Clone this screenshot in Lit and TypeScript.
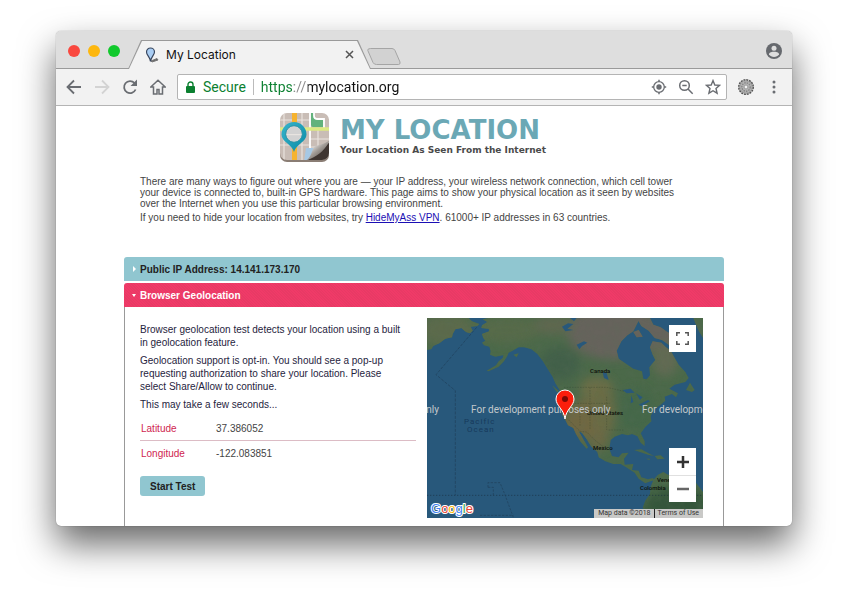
import { LitElement, html, css, svg } from "lit";
import { customElement, state } from "lit/decorators.js";

const NORTH_AMERICA =
  "M205 24 L188 28 L202 36 L186 46 L184 54 L206 56 L208 64 L186 72 L190 84 L196 92 L186 98 L192 106 L208 110 L212 124 L210 134 L226 140 L250 136 L248 144 L236 154 L228 166 L200 182 L206 184 L236 170 L252 154 L262 138 L266 128 L278 122 L296 112 L312 112 L334 118 L352 132 L368 152 L384 178 L398 200 L406 220 L420 242 L430 262 L428 290 L425 312 L436 330 L444 346 L460 354 L468 372 L482 396 L500 416 L504 412 L490 388 L476 364 L486 368 L500 388 L514 410 L532 426 L536 442 L556 454 L580 462 L602 462 L622 474 L644 488 L656 506 L676 520 L692 514 L704 510 L698 504 L684 508 L664 502 L656 482 L636 480 L640 462 L614 464 L612 446 L626 428 L606 430 L596 442 L576 438 L568 416 L572 390 L584 380 L606 372 L624 376 L636 372 L652 378 L662 398 L674 408 L674 394 L662 370 L676 350 L694 334 L692 318 L700 300 L722 284 L736 272 L734 260 L756 252 L768 262 L774 250 L748 236 L764 224 L796 216 L806 204 L796 186 L776 164 L764 144 L752 122 L738 112 L724 98 L698 94 L690 112 L698 134 L706 150 L688 172 L690 196 L680 208 L670 206 L666 184 L640 176 L616 160 L596 146 L590 122 L604 94 L622 76 L640 64 L650 44 L660 24 Z";
const SOUTH_AMERICA =
  "M849 540 L849 624 L692 624 L680 602 L668 594 L676 572 L690 552 L692 530 L700 510 L714 494 L730 486 L744 494 L780 490 L812 506 L826 516 L849 546 Z";
const SIBERIA =
  "M21 24 L146 24 L156 34 L178 42 L172 48 L152 50 L158 62 L150 70 L138 66 L124 54 L106 58 L98 72 L96 82 L76 86 L58 100 L40 108 L34 118 L21 120 Z";
const ISLANDS =
  "M650 24 L690 24 L700 44 L722 52 L742 66 L776 84 L776 104 L746 104 L726 90 L704 84 L686 62 L664 48 Z M640 66 L656 60 L668 80 L650 82 Z M820 24 L849 24 L849 84 L838 66 L828 44 Z M798 240 L810 218 L824 240 L816 246 Z M642 420 L664 418 L690 432 L702 438 L684 434 L660 426 Z M704 438 L722 436 L734 446 L712 448 Z M678 446 L690 446 L688 450 Z M280 134 L296 130 L290 142 Z M396 226 L416 242 L412 248 Z";
const LAKES =
  "M426 50 L444 40 L460 42 L442 56 L460 60 L436 64 Z M470 104 L492 94 L502 98 L486 108 L478 118 Z M548 186 L560 190 L566 210 L552 204 Z M608 240 L632 236 L644 248 L620 250 Z M634 256 L640 276 L632 280 Z M648 250 L668 262 L660 270 Z M656 284 L684 270 L690 274 L664 288 Z M450 24 L470 24 L462 34 Z";

@customElement("location-map")
export class LocationMap extends LitElement {
  static styles = css`
    :host {
      display: block;
    }
    .map {
      position: relative;
      height: 200px;
      overflow: hidden;
      background: #28587b;
      font-family: Roboto, "Liberation Sans", sans-serif;
    }
    .chart {
      display: block;
      width: 100%;
      height: 100%;
    }
    .place {
      font-size: 6px;
      fill: #0c0f0a;
      font-weight: 500;
    }
    .sea {
      font-size: 8px;
      letter-spacing: 1px;
      fill: #173a5c;
    }
    .notice {
      font-size: 10px;
      fill: #c3c8cc;
    }
    .brand {
      font: 13px "Liberation Sans", sans-serif;
      stroke: #fff;
      stroke-width: 2px;
      paint-order: stroke;
      stroke-linejoin: round;
    }
    .b {
      fill: #4285f4;
    }
    .r {
      fill: #ea4335;
    }
    .y {
      fill: #fbbc05;
    }
    .g {
      fill: #34a853;
    }
    .key {
      display: flex;
      align-items: center;
      justify-content: center;
      width: 27px;
      height: 27px;
      padding: 0;
      border: 0;
      background: #fff;
    }
    .full {
      position: absolute;
      top: 7px;
      right: 7px;
    }
    .zoom {
      position: absolute;
      right: 7px;
      bottom: 16px;
      background: #fff;
    }
    .zoom .key + .key {
      border-top: 1px solid #e0e0e0;
    }
    .credit {
      position: absolute;
      right: 0;
      bottom: 0;
      display: flex;
      gap: 3px;
      padding: 0 4px;
      background: #c9c9c7;
      font-size: 7px;
      line-height: 9px;
      color: #333;
    }
    .credit a {
      padding-left: 3px;
      border-left: 1px solid #222;
      color: #333;
      text-decoration: none;
    }
  `;

  render() {
    return html`
      <div class="map">
        <svg class="chart" viewBox="0 0 276 200" preserveAspectRatio="xMidYMid slice" role="img" aria-label="Map of North America">
          <defs>
            <clipPath id="land">
              <path d=${NORTH_AMERICA} /><path d=${SOUTH_AMERICA} /><path d=${SIBERIA} /><path d=${ISLANDS} />
            </clipPath>
            <filter id="soft" x="-30%" y="-30%" width="160%" height="160%"><feGaussianBlur stdDeviation="14" /></filter>
            <filter id="relief" x="0" y="0" width="100%" height="100%">
              <feTurbulence type="fractalNoise" baseFrequency=".04" numOctaves="3" seed="4" />
              <feColorMatrix values="0 0 0 0 .1  0 0 0 0 .16  0 0 0 0 .1  1.6 0 0 0 -.6" />
            </filter>
          </defs>
          <g transform="scale(.33333) translate(-21 -24)">
            <g clip-path="url(#land)">
              <rect x="21" y="24" width="828" height="600" fill="#4b6949" />
              <g filter="url(#soft)">
                <ellipse cx="580" cy="65" rx="140" ry="85" fill="#66645c" />
                <ellipse cx="740" cy="70" rx="90" ry="60" fill="#66645b" />
                <ellipse cx="735" cy="150" rx="40" ry="50" fill="#626b52" />
                <ellipse cx="260" cy="60" rx="100" ry="40" fill="#566a48" />
                <ellipse cx="400" cy="45" rx="60" ry="30" fill="#5f6850" />
                <ellipse cx="80" cy="60" rx="80" ry="50" fill="#5c6b4b" />
                <ellipse cx="420" cy="160" rx="60" ry="50" fill="#426049" />
                <ellipse cx="530" cy="240" rx="50" ry="40" fill="#6c6e46" />
                <ellipse cx="490" cy="330" rx="62" ry="58" fill="#716743" />
                <ellipse cx="550" cy="310" rx="35" ry="80" fill="#6a6c44" />
                <ellipse cx="535" cy="390" rx="30" ry="32" fill="#6c6945" />
                <ellipse cx="650" cy="300" rx="50" ry="70" fill="#456848" />
                <ellipse cx="770" cy="590" rx="100" ry="60" fill="#35573a" />
              </g>
              <rect x="21" y="24" width="828" height="600" filter="url(#relief)" opacity=".25" />
            </g>
            <path d=${LAKES} fill="#28587b" />
            <g fill="none" stroke="#1e3a52" stroke-width="2" opacity=".8">
              <path d="M170 52 L48 194 L106 242 V556" stroke-dasharray="9 4" />
              <path d="M21 556 H849" stroke-dasharray="4 5" stroke="#17283a" />
              <path d="M204 532 V518 H240 L254 552 L280 622 M204 532 H220 V556 M180 616 H280" stroke-dasharray="7 4" />
              <path d="M432 232 H560 L612 244 M446 330 L480 364 L500 366 L524 390 L552 412 M510 232 V360 M440 280 H570 M480 310 V350 M560 260 V360 M566 360 H610" stroke="#2b382b" stroke-dasharray="5 3" opacity=".5" />
            </g>
          </g>
          <text class="sea" x="37" y="106">Pacific</text>
          <text class="sea" x="40" y="114">Ocean</text>
          <text class="place" x="163" y="55">Canada</text>
          <text class="place" x="160" y="97">United States</text>
          <text class="place" x="166" y="132">Mexico</text>
          <text class="place" x="230" y="164">Venezuela</text>
          <text class="place" x="213" y="172">Colombia</text>
          <text class="notice" x="12" y="95" text-anchor="end">only</text>
          <text class="notice" x="44" y="95">For development purposes only</text>
          <text class="notice" x="215" y="95">For development purposes only</text>
          <path d="M138 101 C137 91 129 88 129 81 A9 9 0 0 1 147 81 C147 88 139 91 138 101 Z" fill="#fb1e0c" stroke="#fff" stroke-width="1" />
          <circle cx="138" cy="81" r="3" fill="#7c0a05" />
          <text class="brand" x="4" y="195"><tspan class="b">G</tspan><tspan class="r">o</tspan><tspan class="y">o</tspan><tspan class="b">g</tspan><tspan class="g">l</tspan><tspan class="r">e</tspan></text>
        </svg>
        <button class="key full" aria-label="Toggle full screen">
          <svg width="13" height="13" viewBox="0 0 13 13" fill="none" stroke="#555" stroke-width="1.500"><path d="M.8 4V.8H4M9 .8h3.200V4M12.200 9v3.200H9M4 12.200H.8V9" /></svg>
        </button>
        <div class="zoom">
          <button class="key" aria-label="Zoom in">
            <svg width="12" height="12" viewBox="0 0 12 12" stroke="#333" stroke-width="2.500"><path d="M0 6h12M6 0v12" /></svg>
          </button>
          <button class="key" aria-label="Zoom out">
            <svg width="12" height="12" viewBox="0 0 12 12" stroke="#666" stroke-width="2.500"><path d="M0 6h12" /></svg>
          </button>
        </div>
        <div class="credit"><span>Map data ©2018</span><a href="#terms">Terms of Use</a></div>
      </div>
    `;
  }
}

@customElement("app-root")
export class AppRoot extends LitElement {
  @state() private readings = [
    { label: "Latitude", value: "37.386052" },
    { label: "Longitude", value: "-122.083851" },
  ];

  static styles = css`
    :host {
      display: block;
      overflow: hidden;
      padding: 31px 56px 80px;
      background: #fff;
      font-family: "Liberation Sans", Arial, sans-serif;
      color: #444;
    }
    button {
      font: inherit;
      color: inherit;
      border: 0;
      padding: 0;
      background: none;
    }
    svg {
      display: block;
      flex: none;
    }
    .window {
      border-radius: 5px;
      background: #fff;
      box-shadow: 0 0 1px rgba(0, 0, 0, 0.5), 0 18px 36px rgba(0, 0, 0, 0.6);
    }
    .tabs {
      display: flex;
      align-items: flex-end;
      height: 38px;
      box-sizing: border-box;
      padding: 0 10px 0 12px;
      border-radius: 5px 5px 0 0;
      background: linear-gradient(#9a9a9a, #9a9a9a) bottom / 100% 1px no-repeat #dedede;
    }
    .lights {
      display: flex;
      gap: 8px;
      padding-bottom: 12px;
    }
    .light {
      width: 12px;
      height: 12px;
      border-radius: 50%;
    }
    .close {
      background: #f9483f;
    }
    .mini {
      background: #fdb70e;
    }
    .maxi {
      background: #11c92c;
    }
    .tab {
      display: flex;
      align-items: center;
      width: 243px;
      height: 29px;
      margin-left: 8px;
      padding: 0 17px;
      box-sizing: border-box;
      background: #9a9a9a;
      clip-path: polygon(0 100%, 13px 0, calc(100% - 13px) 0, 100% 100%);
      position: relative;
      font: 12px/16px Inter, "Liberation Sans", sans-serif;
      color: #111;
    }
    .tab::before {
      content: "";
      position: absolute;
      inset: 1px 1px 0;
      background: #f2f2f2;
      clip-path: polygon(0 100%, 13px 0, calc(100% - 13px) 0, 100% 100%);
    }
    .tab > * {
      position: relative;
    }
    .title {
      flex: 1;
      padding-left: 6px;
    }
    .fresh {
      margin: 0 auto 4px -4px;
    }
    .user {
      padding-bottom: 10px;
    }
    .toolbar {
      display: flex;
      align-items: center;
      gap: 12px;
      height: 37px;
      box-sizing: border-box;
      padding: 0 10px;
      border-bottom: 1px solid #b4b4b4;
      background: #f2f2f2;
      color: #6a6d72;
    }
    .address {
      flex: 1;
      display: flex;
      align-items: center;
      height: 26px;
      box-sizing: border-box;
      margin: 0 -1px;
      padding: 0 5px 0 8px;
      border: 1px solid #b4b4b4;
      border-radius: 2px;
      background: #fff;
      font: 14px/18px Roboto, "Liberation Sans", sans-serif;
    }
    .secure {
      display: flex;
      align-items: center;
      gap: 8px;
      padding-right: 7px;
      border-right: 1px solid #bbb;
      color: #0b8030;
      line-height: 16px;
    }
    .url {
      flex: 1;
      min-width: 0;
      padding: 0 0 0 7px;
      border: 0;
      outline: 0;
      font: inherit;
      color: transparent;
      background: linear-gradient(90deg, #0b8030 40px, #888 40px 54px, #111 54px);
      -webkit-background-clip: text;
      background-clip: text;
    }
    .marks {
      display: flex;
      gap: 11px;
    }
    .page {
      padding: 6px 68px 0;
    }
    .masthead {
      display: flex;
      justify-content: center;
      gap: 10px;
      padding-right: 22px;
    }
    h1 {
      margin: 5px 0 0;
      font: bold 26px/26px "DejaVu Sans", Verdana, sans-serif;
      color: #6ba8b5;
    }
    .tagline {
      margin: 1px 0 0;
      font: bold 9px/12px "DejaVu Sans", Verdana, sans-serif;
      color: #4a4a4a;
    }
    .intro {
      max-width: 548px;
      padding: 12px 16px 31px;
      font-size: 10px;
      line-height: 11px;
    }
    .intro p {
      margin: 0 0 3px;
    }
    .intro a {
      color: #1b0fb4;
    }
    .bar {
      display: flex;
      align-items: center;
      gap: 4px;
      width: 100%;
      height: 24px;
      padding: 0 8px;
      border-radius: 3px 3px 0 0;
      font-size: 10px;
      font-weight: bold;
      background: #90c6d0;
      color: #222;
    }
    .bar.open {
      margin-top: 2px;
      background: repeating-linear-gradient(45deg, #f03a68 0 1px, #e83a65 1px 2px);
      color: #fff;
    }
    .body {
      display: grid;
      grid-template-columns: 1fr 1fr;
      gap: 11px;
      padding: 11px 20px 8px 15px;
      border: solid #999;
      border-width: 0 1px;
      font-size: 10px;
      line-height: 13px;
    }
    .test {
      padding-top: 5px;
      color: #1f2440;
    }
    .test p {
      max-width: 266px;
      margin: 0 0 5px;
    }
    table {
      width: 100%;
      border-collapse: collapse;
    }
    th,
    td {
      height: 24px;
      padding: 0 1px;
      text-align: left;
      font-weight: normal;
      color: #444;
    }
    th {
      width: 73px;
      color: #cf2550;
    }
    tr + tr > * {
      border-top: 1px solid #dcbcc5;
    }
    .start {
      height: 20px;
      margin-top: 11px;
      padding: 0 10px;
      border-radius: 3px;
      background: #90c6d0;
      font-weight: bold;
      color: #222;
    }
  `;

  private icon(body: unknown, size = 16) {
    return svg`<svg width=${size} height=${size} viewBox="0 0 16 16" fill="none" stroke="currentColor" stroke-width="1.8">${body}</svg>`;
  }

  render() {
    return html`
      <div class="window">
        <header>
          <div class="tabs">
            <div class="lights">
              <button class="light close" aria-label="Close window"></button>
              <button class="light mini" aria-label="Minimise window"></button>
              <button class="light maxi" aria-label="Maximise window"></button>
            </div>
            <div class="tab">
              <svg width="15" height="16" viewBox="0 0 15 16">
                <path d="M6 14l6-2.500 1 1.500-6 2z" fill="#666" stroke="#777" stroke-width="1" />
                <path d="M5.500 14.500C5.200 10 1.500 8.500 1.500 5a4 4 0 0 1 8 0C9.500 8 6 10 5.500 14.500z" fill="#a9cdf3" stroke="#39475e" stroke-width="1.200" />
              </svg>
              <span class="title">My Location</span>
              <button aria-label="Close tab">
                <svg width="9" height="9" viewBox="0 0 9 9" stroke="#555" stroke-width="1.500"><path d="M1 1l7 7M8 1L1 8" /></svg>
              </button>
            </div>
            <button class="fresh" aria-label="New tab">
              <svg width="34" height="17" viewBox="0 0 34 17"><path d="M3.500 .5H25Q27 .5 28 2.500L33 14Q33.500 16.500 31.500 16.500H9.500Q7 16.500 6 14.500L.8 2.500Q.3 .5 3.500 .5z" fill="#d2d2d2" stroke="#a5a5a5" /></svg>
            </button>
            <button class="user" aria-label="Account">
              <svg width="16" height="16" viewBox="0 0 16 16"><circle cx="8" cy="8" r="8" fill="#66696e" /><circle cx="8" cy="5.200" r="2.500" fill="#dedede" /><path d="M3 11.200C3 9 6.500 8.700 8 8.700s5 .3 5 2.500C12 13 10 14 8 14s-4-1-5-2.800z" fill="#dedede" /></svg>
            </button>
          </div>
          <nav class="toolbar">
            <button aria-label="Back">${this.icon(svg`<path d="M15 8H2M8 1.500L1.500 8 8 14.500" />`)}</button>
            <button aria-label="Forward" disabled>${this.icon(svg`<path d="M1 8h13M8 1.500L14.500 8 8 14.500" stroke="#d3d3d3" />`)}</button>
            <button aria-label="Reload">${this.icon(svg`<path d="M13.600 10.500A6 6 0 1 1 12.500 4" /><path d="M15 .5V7H8.500z" fill="currentColor" stroke="none" />`)}</button>
            <button aria-label="Home">${this.icon(svg`<path d="M3.500 8V15h3.500v-4.500h2V15h3.500V8H15.200L8 1.200 .8 8z" stroke-width="1.500" />`)}</button>
            <div class="address">
              <button class="secure">
                <svg width="9" height="12" viewBox="0 0 9 12"><path d="M2 5.500V3.500a2.500 2.500 0 0 1 5 0V5.500" fill="none" stroke="#0b8030" stroke-width="1.400" /><rect y="5" width="9" height="7" rx="1" fill="#0b8030" /></svg>
                Secure
              </button>
              <input class="url" aria-label="Address" value="https://mylocation.org" />
              <div class="marks">
                <button aria-label="Location access">${this.icon(svg`<circle cx="8" cy="8" r="5.300" stroke-width="1.300" /><circle cx="8" cy="8" r="2.700" fill="currentColor" stroke="none" /><path d="M8 .8v2M8 13.200v2M.8 8h2M13.200 8h2" stroke-width="1.500" />`)}</button>
                <button aria-label="Zoom level">${this.icon(svg`<circle cx="6.500" cy="6.500" r="4.800" stroke-width="1.500" /><path d="M10 10l4.700 4.700M4.300 6.500h4.400" stroke-width="1.500" />`)}</button>
                <button aria-label="Bookmark">${this.icon(svg`<path d="M8 1.600l1.800 4.400 4.800.4-3.600 3.100 1.100 4.700L8 11.700l-4.100 2.500L5 9.500 1.400 6.400 6.200 6z" stroke-width="1.400" />`)}</button>
              </div>
            </div>
            <button aria-label="Extension">
              <svg width="16" height="16" viewBox="0 0 16 16"><circle cx="8" cy="8" r="7.200" fill="none" stroke="#555" stroke-width="1.600" stroke-dasharray="2 .83" /><circle cx="8" cy="8" r="6.300" fill="#b4b4b4" stroke="#777" stroke-width=".6" /><circle cx="8" cy="8" r="4.200" fill="none" stroke="#858585" stroke-width="1.400" stroke-dasharray="1.500 1" /><circle cx="8" cy="8" r="1.900" fill="#f2f2f2" stroke="#777" stroke-width=".6" /></svg>
            </button>
            <button aria-label="Menu">${this.icon(svg`<g fill="currentColor" stroke="none"><circle cx="8" cy="3" r="1.500" /><circle cx="8" cy="8" r="1.500" /><circle cx="8" cy="13" r="1.500" /></g>`)}</button>
          </nav>
        </header>
        <main class="page">
          <div class="masthead">
            <svg width="50" height="52" viewBox="0 0 50 52">
              <defs>
                <clipPath id="tile"><rect x="0" y="1" width="49" height="47" rx="7" /></clipPath>
                <linearGradient id="curl" x1="0" y1="0" x2="1" y2="1"><stop offset=".2" stop-color="#fff" /><stop offset=".5" stop-color="#a39d98" /><stop offset=".8" stop-color="#5d544e" /></linearGradient>
                <linearGradient id="drop" x1="0" y1="0" x2="1" y2="1"><stop offset="0" stop-color="#36b4cc" /><stop offset="1" stop-color="#0b8ba6" /></linearGradient>
              </defs>
              <rect x="0" y="3" width="49" height="47" rx="7" fill="#8a7d74" />
              <g clip-path="url(#tile)">
                <rect width="50" height="50" fill="#c9bdb6" />
                <path d="M0 33H29M0 8H30M4 0V50M22 0V50M38 18V50M29 27H50M29 35H50" stroke="#eae3de" stroke-width="1.200" />
                <path d="M31 0h3v5q1 3 4 3h5v7H33q-2 0-2-2z" fill="#63b27c" />
                <path d="M34 0v4q0 3 4 3h6v10M30 0v50" stroke="#fff" stroke-width="1.800" fill="none" />
                <path d="M0 17H50" stroke="#dcea83" stroke-width="3.500" />
                <path d="M14.500 0V50" stroke="#f6b32f" stroke-width="5" />
                <path d="M26 36h10v14H24z" fill="#a6c8e4" />
                <path d="M24 50C32 46 40 38 50 30V50z" fill="#3f3531" />
                <path d="M24 49C32 47 31 38 35 34c5-1 10-2 15-6-6 12-15 18-26 21z" fill="url(#curl)" />
              </g>
              <path d="M14 40C12 32 1.500 30 1.500 22.500a12.500 12.500 0 0 1 25 0C26.500 30 16 32 14 40z" fill="url(#drop)" />
              <circle cx="14" cy="22" r="8.300" fill="#d2d2d2" stroke="#2a93a6" stroke-width="1" />
              <path d="M6.500 22h15v1.200h-15z" fill="#e8e4e0" />
            </svg>
            <div>
              <h1>MY LOCATION</h1>
              <p class="tagline">Your Location As Seen From the Internet</p>
            </div>
          </div>
          <div class="intro">
            <p>There are many ways to figure out where you are — your IP address, your wireless network connection, which cell tower your device is connected to, built-in GPS hardware. This page aims to show your physical location as it seen by websites over the Internet when you use this particular browsing environment.</p>
            <p>If you need to hide your location from websites, try <a href="#vpn">HideMyAss VPN</a>. 61000+ IP addresses in 63 countries.</p>
          </div>
          <button class="bar" aria-expanded="false">
            <svg width="4" height="6" viewBox="0 0 4 6"><path d="M1 0l3 3-3 3z" fill="#fff" /></svg>
            Public IP Address: 14.141.173.170
          </button>
          <button class="bar open" aria-expanded="true">
            <svg width="4" height="3" viewBox="0 0 4 3"><path d="M0 0h4L2 3z" fill="#fff" /></svg>
            Browser Geolocation
          </button>
          <section class="body">
            <div class="test">
              <p>Browser geolocation test detects your location using a built in geolocation feature.</p>
              <p>Geolocation support is opt-in. You should see a pop-up requesting authorization to share your location. Please select Share/Allow to continue.</p>
              <p>This may take a few seconds...</p>
              <table>
                ${this.readings.map((r) => html`<tr><th scope="row">${r.label}</th><td>${r.value}</td></tr>`)}
              </table>
              <button class="start">Start Test</button>
            </div>
            <location-map></location-map>
          </section>
        </main>
      </div>
    `;
  }
}
